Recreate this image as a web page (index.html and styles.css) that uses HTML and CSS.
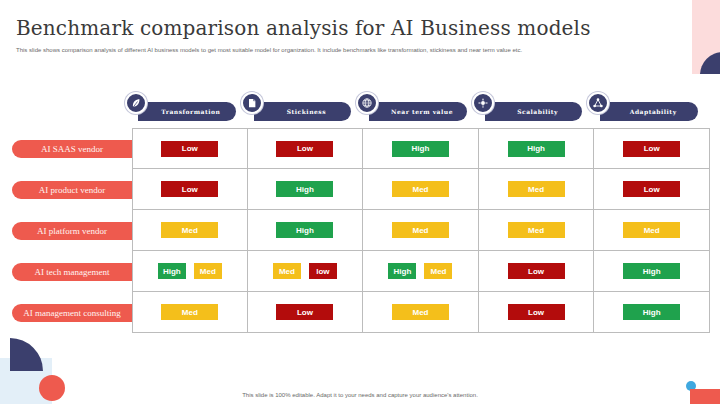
FILE: index.html
```html
<!DOCTYPE html>
<html lang="en">
<head>
<meta charset="utf-8">
<title>Benchmark comparison analysis</title>
<link rel="stylesheet" href="styles.css">
</head>
<body>
<div class="slide">
  <div class="deco-pink"><div class="deco-navy-tr"></div></div>
  <div class="deco-bl">
    <div class="deco-blue"></div>
    <div class="deco-quarter"></div>
    <div class="deco-coral-dot"></div>
  </div>
  <div class="deco-br"><div class="deco-dot"></div><div class="deco-coral-rect"></div></div>

  <h1 class="title">Benchmark comparison analysis for AI Business models</h1>
  <p class="subtitle">This slide shows comparison analysis of different AI business models to get most suitable model for organization. It include benchmarks like transformation, stickiness and near term value etc.</p>

  <div class="board">
    <div class="heads">
      <div class="spacer"></div>
      <div class="head">
        <span class="icon"><svg viewBox="0 0 16 16"><path d="M4 13 C3 8 6 3.5 12.5 2.5 C13 8 10 12 4.5 13 Z" fill="#fff"/><path d="M4 14 L10 6" stroke="#3b3f6d" stroke-width="1" fill="none"/></svg></span>
        <span class="pill">Transformation</span>
      </div>
      <div class="head">
        <span class="icon"><svg viewBox="0 0 16 16"><path d="M4 2.5 H10 L12.5 5 V13.5 H4 Z" fill="#fff"/><path d="M10 2.5 V5 H12.5" stroke="#3b3f6d" stroke-width="0.8" fill="none"/></svg></span>
        <span class="pill">Stickiness</span>
      </div>
      <div class="head">
        <span class="icon"><svg viewBox="0 0 16 16"><circle cx="8" cy="8" r="5.5" fill="none" stroke="#fff" stroke-width="1.2"/><ellipse cx="8" cy="8" rx="2.5" ry="5.5" fill="none" stroke="#fff" stroke-width="1"/><path d="M2.5 8 H13.5 M3.5 5 H12.5 M3.5 11 H12.5" stroke="#fff" stroke-width="0.9"/></svg></span>
        <span class="pill">Near term value</span>
      </div>
      <div class="head">
        <span class="icon"><svg viewBox="0 0 16 16"><circle cx="8" cy="8" r="2.6" fill="#fff"/><path d="M8 1.5 L9.3 3.5 H6.7 Z M8 14.5 L9.3 12.5 H6.7 Z M1.5 8 L3.5 6.7 V9.3 Z M14.5 8 L12.5 6.7 V9.3 Z" fill="#fff"/><path d="M8 4 V5 M8 11 V12 M4 8 H5 M11 8 H12" stroke="#fff" stroke-width="1"/></svg></span>
        <span class="pill">Scalability</span>
      </div>
      <div class="head">
        <span class="icon"><svg viewBox="0 0 16 16"><path d="M8 3.5 L3.5 12 H12.5 Z" fill="none" stroke="#fff" stroke-width="1.2"/><circle cx="8" cy="3.5" r="1.8" fill="#fff"/><circle cx="3.5" cy="12" r="1.8" fill="#fff"/><circle cx="12.5" cy="12" r="1.8" fill="#fff"/></svg></span>
        <span class="pill">Adaptability</span>
      </div>
    </div>

    <div class="grid">
      <div class="label"><span>AI SAAS vendor</span></div>
      <div class="cell first top"><span class="b low">Low</span></div>
      <div class="cell top"><span class="b low">Low</span></div>
      <div class="cell top"><span class="b high">High</span></div>
      <div class="cell top"><span class="b high">High</span></div>
      <div class="cell top"><span class="b low">Low</span></div>

      <div class="label"><span>AI product vendor</span></div>
      <div class="cell first"><span class="b low">Low</span></div>
      <div class="cell"><span class="b high">High</span></div>
      <div class="cell"><span class="b med">Med</span></div>
      <div class="cell"><span class="b med">Med</span></div>
      <div class="cell"><span class="b low">Low</span></div>

      <div class="label"><span>AI platform vendor</span></div>
      <div class="cell first"><span class="b med">Med</span></div>
      <div class="cell"><span class="b high">High</span></div>
      <div class="cell"><span class="b med">Med</span></div>
      <div class="cell"><span class="b med">Med</span></div>
      <div class="cell"><span class="b med">Med</span></div>

      <div class="label"><span>AI tech management</span></div>
      <div class="cell first"><span class="b s high">High</span><span class="b s med">Med</span></div>
      <div class="cell"><span class="b s med">Med</span><span class="b s low">low</span></div>
      <div class="cell"><span class="b s high">High</span><span class="b s med">Med</span></div>
      <div class="cell"><span class="b low">Low</span></div>
      <div class="cell"><span class="b high">High</span></div>

      <div class="label"><span>AI management consulting</span></div>
      <div class="cell first"><span class="b med">Med</span></div>
      <div class="cell"><span class="b low">Low</span></div>
      <div class="cell"><span class="b med">Med</span></div>
      <div class="cell"><span class="b low">Low</span></div>
      <div class="cell"><span class="b high">High</span></div>
    </div>
  </div>

  <p class="footer">This slide is 100% editable. Adapt it to your needs and capture your audience's attention.</p>
</div>
</body>
</html>
```
FILE: styles.css
```css
html, body {
  margin: 0;
  padding: 0;
  background: #ffffff;
}
.slide {
  position: relative;
  width: 720px;
  height: 404px;
  overflow: hidden;
  background: #ffffff;
  font-family: "DejaVu Serif", "Liberation Serif", serif;
}
.title {
  margin: 0;
  padding: 14px 0 0 16px;
  font-size: 20px;
  line-height: 28px;
  font-weight: normal;
  color: #3a3a3a;
  letter-spacing: 0.15px;
}
.subtitle {
  margin: 4px 0 0 16px;
  font-family: "Liberation Sans", Arial, sans-serif;
  font-size: 6px;
  line-height: 9px;
  color: #6a6a6a;
}
.board {
  margin: 37px 10px 0 12px;
  position: relative;
  z-index: 1;
}
.heads {
  display: grid;
  grid-template-columns: 120px repeat(5, 1fr);
  height: 36px;
}
.head {
  display: flex;
  align-items: flex-start;
  margin-left: -7px;
  margin-right: 12px;
}
.icon {
  position: relative;
  z-index: 2;
  flex: none;
  width: 18px;
  height: 18px;
  border-radius: 50%;
  background: #3b3f6d;
  border: 2px solid #ffffff;
  box-shadow: 0 0 0 1px #c5c7da;
  display: flex;
  align-items: center;
  justify-content: center;
}
.icon svg {
  width: 12px;
  height: 12px;
}
.pill {
  flex: 1;
  margin-left: -9px;
  margin-top: 10px;
  height: 19px;
  border-radius: 0 10px 10px 0;
  background: #3b3f6d;
  color: #ffffff;
  font-family: "DejaVu Serif", serif;
  font-weight: bold;
  font-size: 6px;
  letter-spacing: 0.5px;
  display: flex;
  align-items: center;
  justify-content: center;
  padding-left: 8px;
}
.grid {
  display: grid;
  grid-template-columns: 120px repeat(5, 1fr);
  grid-auto-rows: 41px;
}
.label {
  display: flex;
  align-items: center;
}
.label span {
  flex: 1;
  height: 18px;
  border-radius: 9px 0 0 9px;
  background: #ee5a4e;
  color: #fff4f2;
  font-family: "Liberation Serif", serif;
  font-size: 9px;
  display: flex;
  align-items: center;
  justify-content: center;
  white-space: nowrap;
  overflow: hidden;
}
.cell {
  border-right: 1px solid #bcbcbc;
  border-bottom: 1px solid #bcbcbc;
  display: flex;
  align-items: center;
  justify-content: center;
  gap: 8px;
}
.cell.top {
  border-top: 1px solid #bcbcbc;
}
.cell.first {
  border-left: 1px solid #bcbcbc;
}
.b {
  width: 57px;
  height: 16px;
  display: flex;
  align-items: center;
  justify-content: center;
  color: #ffffff;
  font-family: "Liberation Sans", Arial, sans-serif;
  font-weight: bold;
  font-size: 8px;
}
.b.s {
  width: 28px;
}
.low { background: #b30c0c; }
.high { background: #1fa24d; }
.med { background: #f4bf1b; }
.footer {
  margin: 58px 0 0 0;
  text-align: center;
  font-family: "Liberation Sans", Arial, sans-serif;
  font-size: 6px;
  line-height: 9px;
  color: #6a6a6a;
}
/* decorative corner shapes */
.deco-pink {
  position: absolute;
  top: 0;
  right: 0;
  width: 28px;
  height: 74px;
  background: #fcdcdc;
  overflow: hidden;
}
.deco-navy-tr {
  position: absolute;
  left: 8px;
  top: 52px;
  width: 46px;
  height: 46px;
  border-radius: 50%;
  background: #3b3f6d;
}
.deco-bl {
  position: absolute;
  left: 0;
  bottom: 0;
  width: 70px;
  height: 70px;
}
.deco-blue {
  position: absolute;
  left: 0;
  bottom: 0;
  width: 52px;
  height: 46px;
  background: #e3eff8;
}
.deco-quarter {
  position: absolute;
  left: 10px;
  top: 4px;
  width: 33px;
  height: 33px;
  border-radius: 0 33px 0 0;
  background: #3b3f6d;
}
.deco-coral-dot {
  position: absolute;
  left: 39px;
  top: 41px;
  width: 26px;
  height: 26px;
  border-radius: 50%;
  background: #ee5a4e;
}
.deco-br {
  position: absolute;
  right: 0;
  bottom: 0;
  width: 36px;
  height: 24px;
}
.deco-dot {
  position: absolute;
  left: 2px;
  top: 1px;
  width: 10px;
  height: 10px;
  border-radius: 50%;
  background: #3fa8df;
}
.deco-coral-rect {
  position: absolute;
  right: 0;
  bottom: 0;
  width: 30px;
  height: 15px;
  background: #ee5a4e;
}
```
